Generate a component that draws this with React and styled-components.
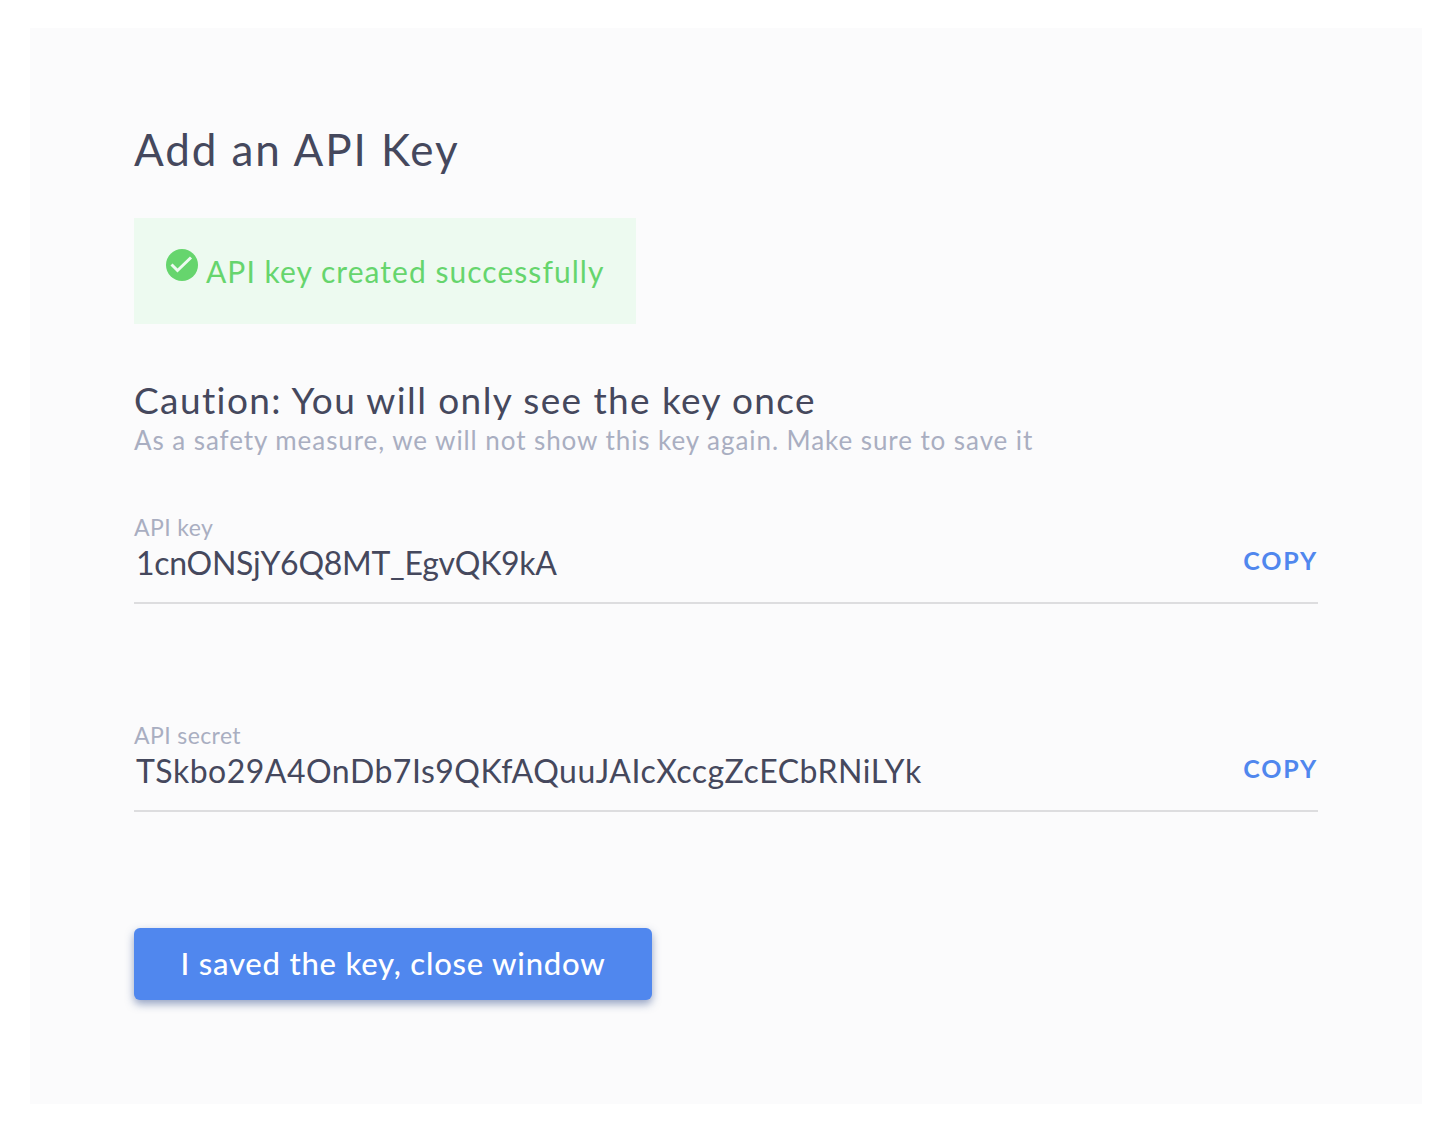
import React from 'react';
import styled, { createGlobalStyle } from 'styled-components';

const GlobalStyle = createGlobalStyle`
  html, body {
    margin: 0;
    background: #ffffff;
  }
  body {
    font-family: Lato, "Noto Sans", sans-serif;
  }
`;

const Page = styled.div`
  padding: 28px 30px 28px 30px;
`;

const Panel = styled.div`
  height: 1076px;
  box-sizing: border-box;
  padding: 92px 104px 0 104px;
  background: #fbfbfc;
`;

const Title = styled.h1`
  margin: 0;
  height: 58px;
  font-size: 44px;
  line-height: 58px;
  font-weight: 400;
  letter-spacing: 1.92px;
  color: #45485d;
`;

const Alert = styled.div`
  display: flex;
  align-items: flex-start;
  gap: 8px;
  width: 502px;
  height: 106px;
  box-sizing: border-box;
  margin-top: 40px;
  padding: 31px 0 0 32px;
  background: #edfaf0;
  color: #66d56d;
  font-size: 30px;
  line-height: 44px;
  letter-spacing: 1.04px;
`;

const CheckIcon = styled.svg`
  flex: none;
  width: 32px;
  height: 32px;
`;

const Caution = styled.h2`
  margin: 51px 0 0;
  font-size: 37px;
  line-height: 50px;
  font-weight: 400;
  letter-spacing: 1.4px;
  color: #45485d;
`;

const Hint = styled.p`
  margin: -2px 0 0;
  font-size: 26px;
  line-height: 34px;
  letter-spacing: 0.93px;
  color: #a9aec1;
`;

const Field = styled.div`
  display: flex;
  align-items: flex-end;
  justify-content: space-between;
  height: 88px;
  box-sizing: border-box;
  margin-top: ${(p) => p.$top}px;
  border-bottom: 2px solid #dddddf;
`;

const FieldText = styled.div`
  display: flex;
  flex-direction: column;
`;

const Label = styled.label`
  margin-bottom: 2px;
  font-size: 23px;
  line-height: 28px;
  letter-spacing: 0.4px;
  color: #a9aec1;
`;

const Value = styled.div`
  padding: 0 0 19px 2px;
  font-size: 32px;
  line-height: 40px;
  letter-spacing: ${(p) => p.$tracking}px;
  color: #45485d;
`;

const CopyLink = styled.a`
  padding-bottom: 26px;
  font-size: 25px;
  line-height: 32px;
  font-weight: 700;
  letter-spacing: 1.8px;
  color: #5087ee;
`;

const SaveButton = styled.button`
  display: block;
  width: 518px;
  height: 72px;
  margin-top: 116px;
  padding: 0 0 2px;
  border: 0;
  border-radius: 6px;
  background: #5087ee;
  box-shadow: 0 4px 8px rgba(48, 76, 140, 0.5);
  color: #ffffff;
  font-family: inherit;
  font-size: 31px;
  font-weight: 500;
  letter-spacing: 0.8px;
`;

export default function App() {
  return (
    <>
      <GlobalStyle />
      <Page>
        <Panel>
          <Title>Add an API Key</Title>
          <Alert>
            <CheckIcon viewBox="0 0 32 32">
              <circle cx="16" cy="16" r="16" fill="#66d56d" />
              <path d="M5.5 15.5l6 6L25 8.5" fill="none" stroke="#edfaf0" strokeWidth="3" />
            </CheckIcon>
            <span>API key created successfully</span>
          </Alert>
          <Caution>Caution: You will only see the key once</Caution>
          <Hint>As a safety measure, we will not show this key again. Make sure to save it</Hint>
          <Field $top={59}>
            <FieldText>
              <Label>API key</Label>
              <Value $tracking={-0.27}>1cnONSjY6Q8MT_EgvQK9kA</Value>
            </FieldText>
            <CopyLink>COPY</CopyLink>
          </Field>
          <Field $top={120}>
            <FieldText>
              <Label>API secret</Label>
              <Value $tracking={0.5}>TSkbo29A4OnDb7Is9QKfAQuuJAIcXccgZcECbRNiLYk</Value>
            </FieldText>
            <CopyLink>COPY</CopyLink>
          </Field>
          <SaveButton>I saved the key, close window</SaveButton>
        </Panel>
      </Page>
    </>
  );
}
